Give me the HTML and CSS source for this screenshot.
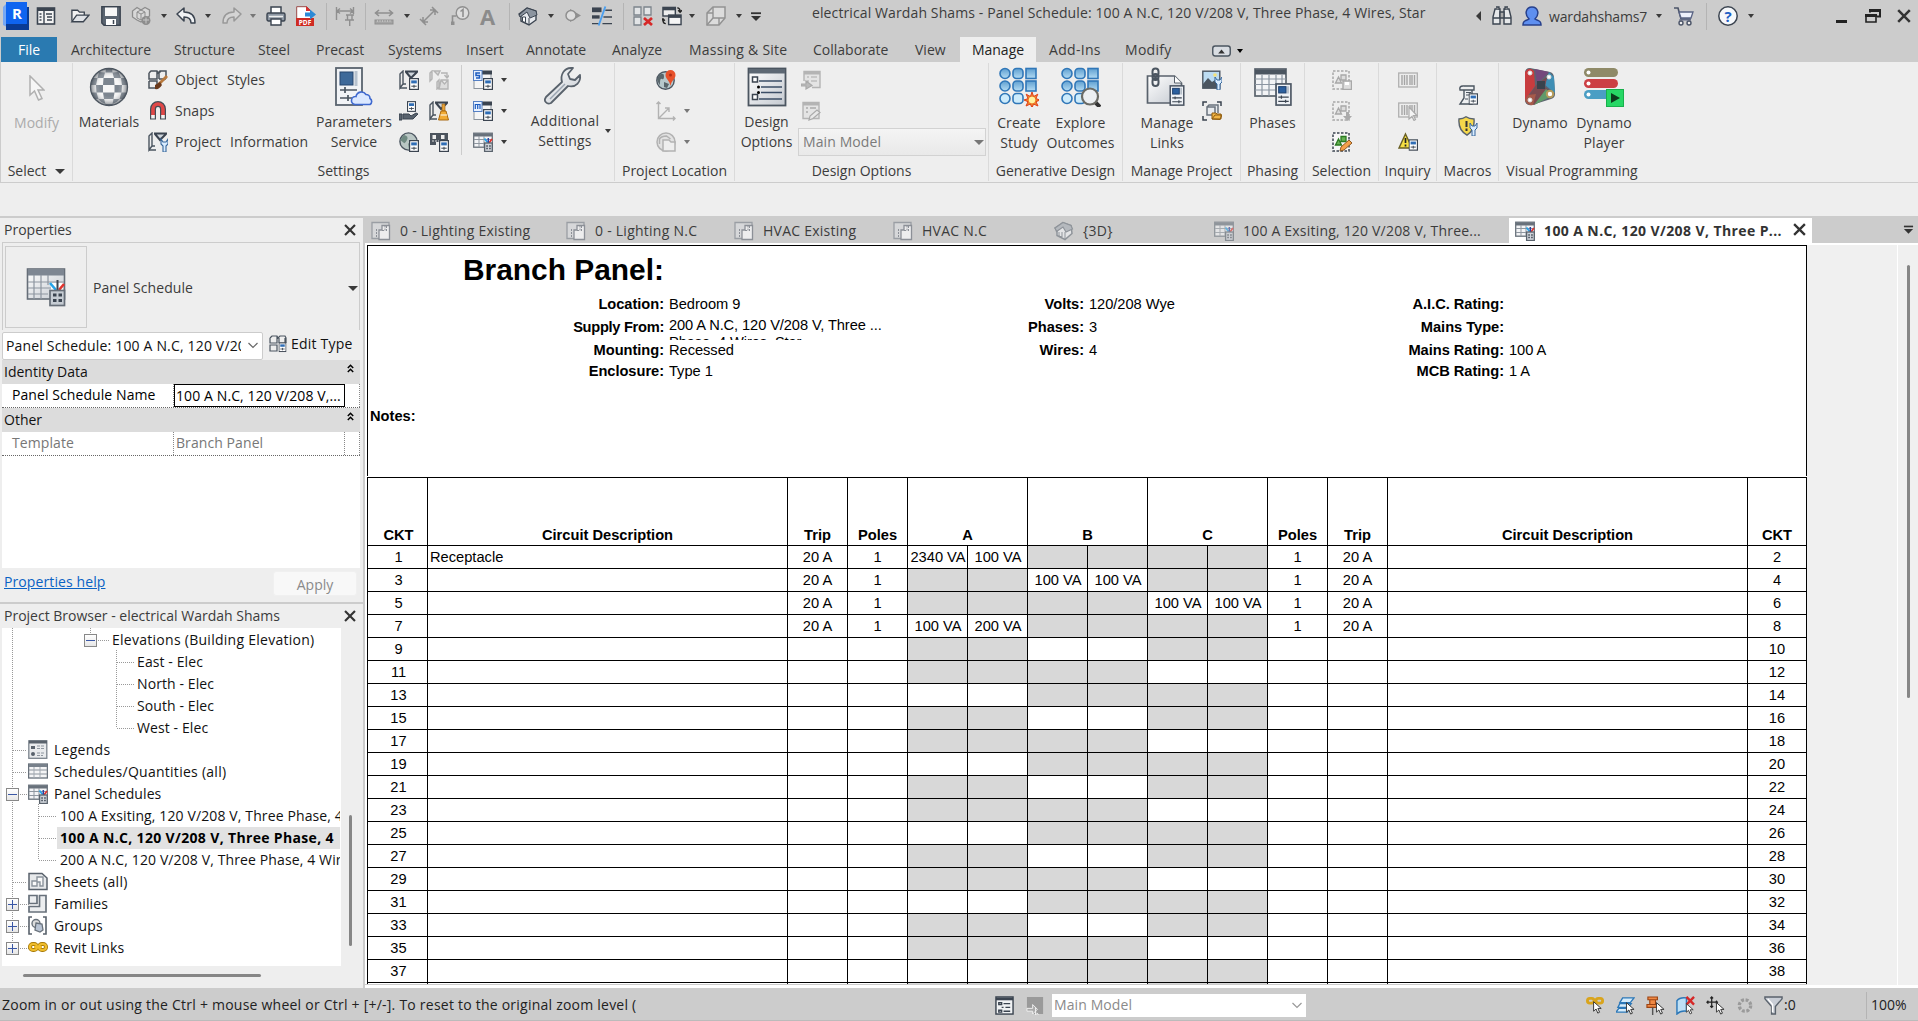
FILE: index.html
```html
<!DOCTYPE html>
<html lang="en">
<head>
<meta charset="utf-8">
<title>Panel Schedule</title>
<link rel="stylesheet" href="styles.css">
</head>
<body>
<svg width="0" height="0" class="defs" aria-hidden="true">
<defs>
<linearGradient id="gl" x1="0" y1="0" x2="1" y2="1"><stop offset="0" stop-color="#fff"/><stop offset="1" stop-color="#c4c9d0"/></linearGradient>
<linearGradient id="gb" x1="0" y1="0" x2="0" y2="1"><stop offset="0" stop-color="#5f9fd0"/><stop offset="1" stop-color="#b4dcf4"/></linearGradient>
<radialGradient id="gs"><stop offset=".5" stop-color="#fff" stop-opacity="0"/><stop offset="1" stop-color="#333b45" stop-opacity=".6"/></radialGradient>

<symbol id="calc" viewBox="0 0 10 12"><rect x=".6" y=".6" width="8.8" height="10.8" fill="#fff" stroke="#3b4450" stroke-width="1.2"/><rect x="2.2" y="2.4" width="5.6" height="3" fill="#2f6db5"/><path d="M2.3 8.2h5.4M5 6.8v3" stroke="#3b4450"/></symbol>
<symbol id="cur" viewBox="0 0 10 14"><path d="M1 1v10l2.6-2.3 1.8 4.3 1.9-.9-1.8-4H9z" fill="#fff" stroke="#333" stroke-width="1"/></symbol>
<symbol id="mini" viewBox="0 0 16 22"><rect x=".9" y=".9" width="14.2" height="20.2" fill="#eef1f5" stroke="#4d5764" stroke-width="1.6"/><rect x="3.4" y="3.5" width="7" height="6" fill="#2b5f9e" stroke="#1d3f6d"/><path d="M12.3 3v7" stroke="#aab4c0" stroke-width="1.5"/><path d="M3 13.5h10M6 12v3M3 17.5h10M10 16v3" stroke="#3b4450" stroke-width="1.2"/></symbol>

<symbol id="logo" viewBox="0 0 27 28"><path d="M0 5 4 1v24l-4-2z" fill="#77a8f4"/><path d="M3 21h20v-16h3v23H3z" fill="#0a3b95"/><rect x="3" width="21" height="22" fill="#0f64f0"/></symbol>
<symbol id="ui" viewBox="0 0 20 20"><rect x="1.5" y="2" width="17" height="16" fill="#f4f4f4" stroke="#3b4450" stroke-width="1.6"/><path d="M1 3.500h18" stroke="#3b4450" stroke-width="3"/><path d="M8 4v14M3.500 8h2M3.500 11h2M3.500 14h2M10 8h6M11 11h5M11 14h5" stroke="#3b4450" stroke-width="1.400"/></symbol>
<symbol id="open" viewBox="0 0 21 20"><path d="M2 15V4h6l2 2h5v3" fill="#f2f2f2" stroke="#3b4450" stroke-width="1.400"/><path d="M2 16 7 9h13l-6 7z" fill="#dfe2e6" stroke="#3b4450" stroke-width="1.400"/></symbol>
<symbol id="save" viewBox="0 0 20 20"><path d="M.8.8h18.4v18.4H3L.8 17z" fill="#5a6470" stroke="#3b4450" stroke-width="1.400"/><rect x="4" y="1.500" width="12" height="8.500" fill="#f7f7f7"/><rect x="5" y="13" width="10" height="6" fill="#fff"/><path d="M12.500 14v4" stroke="#3b4450" stroke-width="1.500"/></symbol>
<symbol id="sync" viewBox="0 0 20 20"><path d="M6 1.500 10 4l4-2.500L18.500 4v6l-4 3-4.500 3-4-2-4.500-3V5z" fill="#d8d8d8" stroke="#8d8d8d" stroke-width="1.300"/><path d="M6 6l4-2 4 2v6l-4 2-4-2zM6 6l4 2 4-2M10 8v6" fill="none" stroke="#8d8d8d"/><circle cx="15" cy="14.500" r="4.500" fill="#8d8d8d"/><path d="M12 14h6M15 11.500v6" stroke="#c8c8c8"/></symbol>
<symbol id="undo" viewBox="0 0 20 18"><path d="M1 7l7-6v4c6 0 11 2 11 11h-4c0-4-2-6-7-6v4z" fill="#f0f2f4" stroke="#3b4450" stroke-width="1.500" stroke-linejoin="round"/></symbol>
<symbol id="redo" viewBox="0 0 20 18"><path d="M19 7l-7-6v4C6 5 1 7 1 16h4c0-4 2-6 7-6v4z" fill="#d4d4d4" stroke="#999" stroke-width="1.500" stroke-linejoin="round"/></symbol>
<symbol id="print" viewBox="0 0 20 20"><path d="M5 8V1h10v7" fill="#fff" stroke="#3b4450" stroke-width="1.500"/><rect x="1" y="7" width="18" height="8" rx="1.500" fill="#8c96a2" stroke="#3b4450" stroke-width="1.400"/><path d="M3 10.500h14" stroke="#eee" stroke-width="1.500"/><path d="M5 13h10v6H5z" fill="#fff" stroke="#3b4450" stroke-width="1.400"/></symbol>
<symbol id="pdf" viewBox="0 0 20 20"><path d="M.7.7h10l4 4v9H.7z" fill="#fff" stroke="#9a4a48"/><path d="M10 0l5 5h-5z" fill="#d83030"/><rect y="12" width="18" height="8" fill="#cf2b22"/><path d="M9 6.500h5v-3l6 5-6 5v-3H9z" fill="#2d8ad6"/></symbol>
<symbol id="dim" viewBox="0 0 20 20"><g stroke="#8f8f8f" stroke-width="1.400" fill="none"><path d="M1.500 1v13M18.500 1v7M2 5h16M5 2.500 2 5l3 2.500M15 2.500 18 5l-3 2.500M11 9h8M12.500 9v5M17 9v5M10 14h9M14.700 14v6"/></g></symbol>
<symbol id="meas" viewBox="0 0 20 20"><path d="M1 7h18M5 4 1.500 7 5 10M15 4l3.500 3-3.500 3" stroke="#8f8f8f" stroke-width="1.600" fill="none"/><rect x="1" y="14" width="18" height="4" fill="#a5a5a5" stroke="#8f8f8f"/><path d="M3 15h14" stroke="#ddd" stroke-dasharray="1 1.500"/></symbol>
<symbol id="align" viewBox="0 0 20 20"><path d="M4 16 16 4M4 11v5h5M11 4h5v5M1 13l6 6M13 1l6 6" stroke="#8f8f8f" stroke-width="1.500" fill="none"/></symbol>
<symbol id="tag" viewBox="0 0 20 20"><circle cx="12.500" cy="7" r="6.300" fill="#ddd" stroke="#8f8f8f" stroke-width="1.400"/><path d="M10.500 5.500 13 3.500V11M6 10H2.500v6" stroke="#8f8f8f" stroke-width="1.600" fill="none"/><rect x="1" y="15.500" width="3.500" height="3.500" fill="#8f8f8f"/></symbol>
<symbol id="house" viewBox="0 0 20 20"><path d="M1 8 9 2l9 3v9l-7 5-8-4V9z" fill="#e6e9ed" stroke="#3b4450" stroke-width="1.400"/><path d="M9 2 18 5l1 4-7 3-3-6-7 5-1-2z" fill="#8b949f" stroke="#3b4450"/><path d="M11 12v7M4.500 11v4.500l3 1V11z" stroke="#3b4450" fill="#fff"/></symbol>
<symbol id="sect" viewBox="0 0 18 20"><path d="M6 3l11 6.500L6 16z" fill="#8f8f8f"/><circle cx="7" cy="9.500" r="5" fill="#ddd" stroke="#8f8f8f" stroke-width="1.500"/></symbol>
<symbol id="thin" viewBox="0 0 21 20"><path d="M0 3.500h10" stroke="#3b4450" stroke-width="5"/><path d="M0 11h8" stroke="#3b4450" stroke-width="3.500"/><path d="M0 18h7M14 4h7M12 11h9M11 18h10" stroke="#3b4450" stroke-width="1.500"/><path d="M14 0 7 20" stroke="#4a9ff0" stroke-width="2"/></symbol>
<symbol id="closeh" viewBox="0 0 20 20"><path d="M1 1h7v8H1zM11 1h7v8h-7zM1 11h7v8H1z" fill="#e2e4e6" stroke="#7c848c" stroke-width="1.300"/><path d="M11 12l8 7M19 12l-8 7" stroke="#d62828" stroke-width="2.700"/></symbol>
<symbol id="switch" viewBox="0 0 21 20"><rect x="1" y="1" width="13" height="9" fill="#eee" stroke="#3b4450" stroke-width="1.500"/><path d="M1 2.500h13" stroke="#3b4450" stroke-width="3"/><rect x="7" y="9" width="13" height="10" fill="#f5f5f5" stroke="#3b4450" stroke-width="1.500"/><path d="M7 10.500h13" stroke="#3b4450" stroke-width="3"/><path d="M16 1.500q3 0 3 4M17 4l2 2 2-2M4 18q-3 0-3-4M-1 15l2-2 2 2" stroke="#222" stroke-width="1.500" fill="none"/></symbol>
<symbol id="sel3" viewBox="0 0 20 20"><path d="M1 7l6-6h12v11l-6 7H1z" fill="#dcdcdc" stroke="#929292" stroke-width="1.500"/><path d="M7 1v11h12M1 7h6M13 12v7M7 12l-6 7" fill="none" stroke="#929292" stroke-width="1.400"/></symbol>
<symbol id="more" viewBox="0 0 12 9"><path d="M1 1.200h10" stroke="#333" stroke-width="1.800"/><path d="M1 4h10L6 9z" fill="#333"/></symbol>
<symbol id="bino" viewBox="0 0 20 20"><path d="M1 11 3 3h5v15H1zM12 3h5l2 8v7h-7z" fill="#e6e8ea" stroke="#3b4450" stroke-width="1.400"/><path d="M8 6h4v6H8zM1 12h7M12 12h7M4 1h3v3M13 4V1h3" fill="#aaa" stroke="#3b4450" stroke-width="1.300"/></symbol>
<symbol id="user" viewBox="0 0 20 20"><path d="M1 19c0-5 3-4 6-6-5-5-3-12 3-12s8 7 3 12c3 2 6 1 6 6z" fill="#5e8ff0" stroke="#27408c" stroke-width="1.500"/></symbol>
<symbol id="cart" viewBox="0 0 20 20"><path d="M0 2h4l3 11h10" stroke="#4b5468" stroke-width="1.600" fill="none"/><path d="M5 6h14l-2 6H7z" fill="#eef1fb" stroke="#5a6484" stroke-width="1.300"/><path d="M5 14h12" stroke="#5a6484"/><circle cx="7" cy="17" r="2" fill="#eee" stroke="#4b5468" stroke-width="1.400"/><circle cx="15" cy="17" r="2" fill="#eee" stroke="#4b5468" stroke-width="1.400"/></symbol>
<symbol id="help" viewBox="0 0 20 20"><circle cx="10" cy="10" r="9.200" fill="#f6f8fb" stroke="#3b4450" stroke-width="1.500"/></symbol>
<symbol id="restore" viewBox="0 0 16 14"><path d="M5 3.500V1h10v6.500h-3" fill="none" stroke="#222" stroke-width="2"/><path d="M1 7h10v6H1z" fill="none" stroke="#222" stroke-width="1.600"/><path d="M0 6.500h12" stroke="#222" stroke-width="3"/><path d="M4 1.500h12" stroke="#222" stroke-width="3"/></symbol>
<symbol id="x" viewBox="0 0 14 14"><path d="M1.200 1.200 12.800 12.800M12.800 1.200 1.200 12.800" stroke="#333" stroke-width="2.500"/></symbol>

<symbol id="arrow" viewBox="0 0 16 26"><path d="M1 1v19l4.500-4 4 9 3.500-1.500-4-8.500h6z" fill="#f6f6f6" stroke="#b0b0b0" stroke-width="1.500"/></symbol>
<symbol id="ball" viewBox="0 0 40 40"><circle cx="20" cy="20" r="18.500" fill="#f6f6f6"/><g fill="#7c858f"><path d="M17 1.500h6l.5 4h-7zM10 5l6 .5-1.500 5.500h-6zM23.500 5.500l6-.5 2.500 6h-7zM14.500 11h10.500l.5 7h-11.500zM3.500 11h5l-1.500 7H1.700zM32 11h4.500l2 7h-5.500zM7 18h7v7.500H7.500zM25.500 18h7.500l-.5 7.500h-7zM14 25.500h11.500l-1 6.500h-9.500zM1.800 25.500h5.700l2 6.500H5.500zM32.500 25.500h5.700L35 32h-4.500zM9.500 32h5.500l1.500 5q-4-1-7-5zM24.500 32h6q-3 4-7 5zM16 37h8l-1 2h-6z"/></g><circle cx="20" cy="20" r="18.500" fill="url(#gs)" stroke="#4d5660" stroke-width="1.300"/></symbol>
<symbol id="objst" viewBox="0 0 20 20"><path d="M1 3l2-2h6l1 2 2-2h6v7l-2 2M1 3v6h8V1M11 9V3l2-2M1 11v7h6M1 11h8v4M11 9h7" fill="#eee" stroke="#4b535c" stroke-width="1.500"/><path d="M19 6 11 14" stroke="#b97a3e" stroke-width="2.800"/><path d="M12 12l-5 3v4q4 1 7-4z" fill="#6b3a1c"/></symbol>
<symbol id="snap" viewBox="0 0 20 20"><path d="M5 18.500V8a5 5 0 0 1 10 0v10.500" fill="none" stroke="#444d57" stroke-width="6"/><path d="M5 15V8a5 5 0 0 1 10 0v7" fill="none" stroke="#e04848" stroke-width="3.600"/><path d="M5 14v3.500M15 14v3.500" stroke="#f2f2f2" stroke-width="3.600"/></symbol>
<symbol id="pbase" viewBox="0 0 20 20"><path d="M1 4l3-3v13l-3 4z" fill="#eee" stroke="#4b5560" stroke-width="1.400"/><path d="M1 18h7M4 14h3" stroke="#4b5560" stroke-width="1.400"/><path d="M6 1.500h13M7 2l5 6 6-6" stroke="#3b4450" stroke-width="2" fill="#cfd5db"/></symbol>
<symbol id="pinfo" viewBox="0 0 20 20"><use href="#pbase"/><path d="M13 7v5l2 2v6h3v-6l2-2V7l-2 3h-3z" fill="#d9ecff" stroke="#37679b" stroke-width="1.100"/></symbol>
<symbol id="pparam" viewBox="0 0 20 20"><use href="#pbase"/><use href="#calc" x="10" y="8" width="10" height="12"/></symbol>
<symbol id="xfer" viewBox="0 0 20 20"><g fill="#ddd" stroke="#b4b4b4" stroke-width="1.400"><path d="M1 3l2-2v8l-2 2zM5 1h6l-2 4zM8 12l2-2v7l-2 2zM12 10h7v9h-9zM12 10l3.500 4 3.500-4"/><path d="M12 3h6v4M15.500 5 18 8l2.500-3" fill="none"/></g></symbol>
<symbol id="hand" viewBox="0 0 20 20"><use href="#calc" x="8" y="0" width="9" height="11"/><path d="M0 13h3v6H0zM4 13h6l2 2 5-3 2 1-5 5H4z" fill="#59636e" stroke="#3b4450"/></symbol>
<symbol id="purge" viewBox="0 0 20 20"><use href="#pbase"/><path d="M13 3h3v7h-3z" fill="#e8a33b" stroke="#8f5a10" stroke-width=".6"/><path d="M12 10h5l2.500 9h-10z" fill="#f1ab35" stroke="#a86912"/><path d="M11.500 14h6.500" stroke="#fff"/></symbol>
<symbol id="globep" viewBox="0 0 20 20"><circle cx="9.500" cy="9.500" r="8.600" fill="#b9c6c4" stroke="#4b5560" stroke-width="1.400"/><path d="M5 3q5 1 3 5t-3 3-4-3zM9 11l4 3-3 4z" fill="#6f8a82"/><use href="#calc" x="10" y="8" width="10" height="12"/></symbol>
<symbol id="tape" viewBox="0 0 20 20"><path d="M1 1h18v9H7v3H1z" fill="#4b535d"/><rect x="3.500" y="3" width="3.500" height="4" fill="#eee"/><rect x="12" y="3" width="3.500" height="4" fill="#eee"/><path d="M3 9h14" stroke="#ddd" stroke-dasharray="2 1"/><use href="#calc" x="10" y="8" width="10" height="12"/></symbol>
<symbol id="mepd" viewBox="0 0 20 20"><rect x="1" y="1.500" width="17" height="17" fill="#f5f5f5" stroke="#8b939c"/><path d="M8 2.500h11" stroke="#3b4450" stroke-width="4"/><rect width="8.500" height="10" x=".5" y=".5" fill="#e8f1ff" stroke="#5580c4"/></symbol>
<symbol id="structs" viewBox="0 0 20 20"><use href="#mepd"/><path d="M7 3H3v2.500h3.500V8H3" stroke="#1d5cc0" stroke-width="1.500" fill="none"/><use href="#calc" x="10" y="8" width="10" height="12"/></symbol>
<symbol id="meps" viewBox="0 0 20 20"><use href="#mepd"/><path d="M2.300 8V3.500H7V8M4.700 3.500V8" stroke="#1d5cc0" stroke-width="1.200" fill="none"/><use href="#calc" x="10" y="8" width="10" height="12"/></symbol>
<symbol id="sched" viewBox="0 0 20 20"><rect x=".7" y="1.200" width="18.600" height="14" fill="#f3f4f6" stroke="#68717b" stroke-width="1.300"/><path d="M1 3h18" stroke="#68717b" stroke-width="3"/><path d="M1 7.500h18M1 11.500h11M6 4v11M11 4v11" stroke="#8f97a0"/><path d="M12.500 8h6v4h-6z" fill="#f3f4f6"/><path d="M11.500 6.500l3 4" stroke="#25a3e8" stroke-width="1.700"/><path d="M19 7l-3 4" stroke="#e2342e" stroke-width="1.700"/><path d="M15.300 6v5" stroke="#2b3fa0" stroke-width="1.500"/><rect x="11.600" y="11" width="7.700" height="8.500" fill="#cfd4da" stroke="#59626c" stroke-width="1.300"/><path d="M13.300 14h1.500M16.200 14h1.500M13.300 16.500h1.500M16.200 16.500h1.500" stroke="#3b4450" stroke-width="1.500"/></symbol>
<symbol id="globe" viewBox="0 0 20 20"><circle cx="9.500" cy="10.500" r="8.700" fill="#b6c8cc" stroke="#4b5560" stroke-width="1.400"/><path d="M3 5q5-3 5 1t-2 3-2 4-3-4zM8 12l5 2-2 4-3-1z" fill="#59666c"/><path d="M14.500 16c-1-6-5-7-5-11a4.800 4.800 0 0 1 10 0c0 4-4 5-5 11z" fill="#e8512b"/><circle cx="14.500" cy="5" r="1.500" fill="#b02e16"/></symbol>
<symbol id="coord" viewBox="0 0 20 20"><path d="M2.500 1v16.500H19M2.500 17.500 13 7M9 7h4v4M.5 3l2-2 2 2M17 15.500l2 2-2 2" fill="none" stroke="#b2b2b2" stroke-width="1.400"/></symbol>
<symbol id="posn" viewBox="0 0 20 20"><circle cx="10" cy="10" r="9" fill="#e2e2e2" stroke="#b2b2b2" stroke-width="1.500"/><path d="M3.500 12V7q2-3 7-3l4 3" fill="none" stroke="#b2b2b2" stroke-width="1.500"/><path d="M7 8h6l2 2h4v9H7z" fill="#eee" stroke="#b2b2b2" stroke-width="1.500"/></symbol>
<symbol id="opt1" viewBox="0 0 20 20"><path d="M3 11V1.500h16v16h-8" fill="#e4e4e4" stroke="#b4b4b4" stroke-width="1.400"/><path d="M3 3h16" stroke="#b4b4b4" stroke-width="3"/><path d="M6 7h2M10 7h6M6 11h2M10 11h6M0 14h5v-3l6 4.500L5 19v-3H0z" fill="#bbb" stroke="#aaa" stroke-width="1.200"/></symbol>
<symbol id="opt2" viewBox="0 0 20 20"><path d="M2 1.500h16v16H2z" fill="#e4e4e4" stroke="#b4b4b4" stroke-width="1.400"/><path d="M2 3h16" stroke="#b4b4b4" stroke-width="3"/><path d="M5 7h2M9 7h6M5 11h2" stroke="#aaa" stroke-width="1.400"/><path d="M8 19l1-4 7-6 3 2.500-7 6z" fill="#e8e8e8" stroke="#aaa" stroke-width="1.200"/></symbol>
<symbol id="params" viewBox="0 0 40 40"><rect x="2" y="1" width="26" height="37" fill="#f1f3f6" stroke="#59636e" stroke-width="1.800"/><rect x="6" y="5" width="13" height="13" fill="#3e6999" stroke="#26466e"/><path d="M22 4v15" stroke="#b7c2cf" stroke-width="3"/><path d="M6 23h17M11 20v6M6 31h12M14 28v6" stroke="#4b5560" stroke-width="1.700"/><path d="M21 37.500a4 4 0 0 1 1-8 5.500 5.500 0 0 1 10-2 4 4 0 0 1 4 4 3.500 3.500 0 0 1 0 6z" fill="#dbe8ff" stroke="#3f69cf" stroke-width="1.600"/></symbol>
<symbol id="wrench" viewBox="0 0 40 40"><path d="M4 31 20 16C18 9 22 2 29 2h2l-5 6 2 5 5 1 5-5c1 7-4 13-12 11L9 37c-4 2-8-2-5-6z" fill="url(#gl)" stroke="#59626c" stroke-width="1.800" stroke-linejoin="round"/><path d="M8 33 23 18" stroke="#9aa4b0" stroke-width="1.500"/></symbol>
<symbol id="dopt" viewBox="0 0 40 40"><rect x="1.500" y="1.500" width="37" height="37" fill="url(#gl)" stroke="#4b5560" stroke-width="1.800"/><rect x="2" y="2" width="36" height="4.500" fill="#5d6874"/><path d="M12 14h23M14 20h21M14 25.500h21M12 32h23" stroke="#3b4d66" stroke-width="1.700"/><path d="M5.500 10h5v5h-5zM5.500 27.500h5v5h-5z" fill="#fff" stroke="#3b4450" stroke-width="1.500"/><circle cx="11.500" cy="20" r="1.500"/><circle cx="11.500" cy="25.500" r="1.500"/></symbol>
<symbol id="gen" viewBox="0 0 40 40"><g fill="url(#gb)" stroke="#3077b8" stroke-width="1.600"><circle cx="6" cy="6.500" r="5"/><rect x="14" y="1.500" width="10" height="10" rx="3.500"/><rect x="27" y="1.500" width="10" height="10"/><circle cx="6" cy="19" r="5"/><rect x="14" y="14" width="10" height="10" rx="3.500"/><rect x="27" y="14" width="10" height="10"/></g><g fill="#cdebfb" stroke="#3077b8" stroke-width="1.600"><circle cx="6" cy="31.500" r="5"/><rect x="14" y="26.500" width="10" height="10" rx="3.500"/></g></symbol>
<symbol id="create" viewBox="0 0 40 40"><use href="#gen"/><path d="M33 25l1.600 4.500 4.200-2.300-1.900 4.400L41 33l-4 1.700 2 4.300-4.500-2L33 41l-1.600-4-4.400 2 2-4.300-4-1.700 4.100-1.400-1.900-4.400 4.200 2.300z" fill="#f0842a" stroke="#e0401a"/><circle cx="33" cy="33" r="3.200" fill="#fff3a0"/></symbol>
<symbol id="explore" viewBox="0 0 40 40"><use href="#gen"/><path d="M34 35l5 5" stroke="#333" stroke-width="4"/><circle cx="29" cy="29.500" r="8" fill="#eceff2" stroke="#6b6b66" stroke-width="2.200"/></symbol>
<symbol id="mlinks" viewBox="0 0 42 40"><path d="M1.500 9h27l7 7v20h-34z" fill="url(#gl)" stroke="#59626c" stroke-width="1.700"/><path d="M28.500 9v7h7" fill="#fff" stroke="#59626c"/><g fill="none" stroke="#4b5560" stroke-width="2"><rect x="6.500" y="1.500" width="6" height="8" rx="3"/><rect x="6.500" y="7" width="6" height="6" rx="3"/><rect x="6.500" y="11" width="6" height="8" rx="3"/></g><use href="#mini" x="23" y="18" width="16" height="21"/></symbol>
<symbol id="decal" viewBox="0 0 20 20"><rect x=".8" y="1.200" width="17" height="17" fill="#bcdcf2" stroke="#4b5560" stroke-width="1.400"/><path d="M1 14l5-6 4 4 3-2 4 3v5H1z" fill="#4b5560"/><circle cx="13" cy="5" r="1.800" fill="#f4e27a"/><path d="M13 7v5l2 2v6h3v-6l2-2V7l-2 3h-3z" fill="#d9ecff" stroke="#37679b"/></symbol>
<symbol id="startv" viewBox="0 0 20 20"><path d="M1 5V1h4M15 1h4v4M1 15v4h4" fill="none" stroke="#3b4450" stroke-width="1.500"/><path d="M5 6l2-2h9v8M5 6h8v8H5z" fill="#e8ebee" stroke="#6a737d" stroke-width="1.500"/><path d="M10 18v-6h4l1 1h4v5zM10 18l3-4h7l-2 4.500z" fill="#f2b545" stroke="#8f5d10"/></symbol>
<symbol id="phases" viewBox="0 0 40 40"><rect x="2" y="2" width="31" height="27" fill="#f3f4f6" stroke="#59626c" stroke-width="1.700"/><path d="M2 5h31" stroke="#4b5560" stroke-width="5"/><path d="M2 12h31M2 17.500h31M2 23h31M9 8v21M16 8v21M23 8v21M29 8v10" stroke="#8b95a1" stroke-width="1.200"/><use href="#mini" x="22" y="16" width="17" height="23"/></symbol>
<symbol id="selg" viewBox="0 0 20 20"><rect x="1" y="1" width="16" height="18" fill="none" stroke="#a8a8a8" stroke-width="1.500" stroke-dasharray="2.500 1.500"/><path d="M3.500 13l3-6 3 6zM9 5h5v5H9z" fill="#ddd" stroke="#a8a8a8" stroke-width="1.300"/></symbol>
<symbol id="selsave" viewBox="0 0 20 20"><use href="#selg"/><rect x="11" y="11" width="8.500" height="8.500" fill="#ddd" stroke="#a8a8a8" stroke-width="1.400"/><path d="M13 12h4v3h-4z" fill="#fff"/></symbol>
<symbol id="selload" viewBox="0 0 20 20"><use href="#selg"/><path d="M14 11h3v4h3l-4.500 5-4.500-5h3z" fill="#aaa"/></symbol>
<symbol id="seledit" viewBox="0 0 20 20"><rect x="1" y="1" width="16" height="18" fill="#f7f7f7" stroke="#3b4450" stroke-width="1.500" stroke-dasharray="2.500 1.500"/><path d="M3.500 13l3-6 3 6zM9 4.500h5v5H9z" fill="#67b254" stroke="#2b7a22" stroke-width="1.300"/><path d="M8 19l1-4 8-7 3 3-8 7z" fill="#f3a04a" stroke="#8f5a22"/></symbol>
<symbol id="ids" viewBox="0 0 20 20"><rect x=".7" y="3" width="18.600" height="14" fill="#eee" stroke="#b0b0b0" stroke-width="1.300"/><path d="M4 5v10M6.500 5v10M9 5v10M12 5v10M14 5v10M16.500 5v10" stroke="#a5a5a5" stroke-width="1.400"/></symbol>
<symbol id="idsel" viewBox="0 0 20 20"><use href="#ids" y="-1"/><path d="M11 6v12l3-2.500 2 4 1.500-1-2-4H19z" fill="#f4f4f4" stroke="#aaa" stroke-width="1.200"/></symbol>
<symbol id="warn" viewBox="0 0 20 20"><path d="M7.500 2 14 16H1z" fill="#f5df42" stroke="#6a6026" stroke-width="1.400"/><path d="M7.500 6v5M7.500 12.500v2" stroke="#222" stroke-width="1.700"/><use href="#calc" x="10.500" y="7" width="9.500" height="12"/></symbol>
<symbol id="macro" viewBox="0 0 20 20"><path d="M5 1h11v4H6v8l-4 6h12V5" fill="#eef0f2" stroke="#4b5560" stroke-width="1.400"/><path d="M5 1Q1 1 2 5h4" fill="#eef0f2" stroke="#4b5560" stroke-width="1.400"/><path d="M8 7.500h5M8 10h3M7 14h3" stroke="#4b5560"/><use href="#calc" x="10.500" y="8" width="9.500" height="12"/></symbol>
<symbol id="msec" viewBox="0 0 20 20"><path d="M8 .8Q5 3 1 3q-1 11 8 16.200Q17 14 16 3 11 3 8 .8z" fill="#f5d84a" stroke="#59626c" stroke-width="1.400"/><path d="M8.500 5v6M8.500 12.500v2.500" stroke="#333" stroke-width="2"/><path d="M12 7v5l2 2v6h3v-6l2-2V7l-2 3h-3z" fill="#d9ecff" stroke="#37679b"/></symbol>
<symbol id="dyn" viewBox="0 0 32 40"><path d="M1 6Q1 1 6 1l20 4q4 1 4 6l1 16q0 4-4 5L8 38q-7 1-7-5z" fill="#5c6470"/><path d="M1 5v28l10-14L10 4Q5-1 1 5z" fill="#c73c3e"/><path d="M11 2l14 3-12 12z" fill="#74487c"/><path d="M25 5l5 5 1 16-10-8z" fill="#3f8fb5"/><path d="M13 17l10-7-2 10 9 7-20 11-9-4z" fill="#7b4a50"/><path d="M22 22l8 6-20 10z" fill="#5f9a6a"/><path d="M1 33q2 6 8 5l3-11-8 1z" fill="#a65a4a"/><path d="M13 14h8v8h-8z" fill="#39424c"/><g fill="#fff" stroke="#ddd"><circle cx="6" cy="6" r="2"/><circle cx="25" cy="10" r="2"/><circle cx="6" cy="33" r="2"/></g><circle cx="26" cy="27" r="3.200" fill="#fff" stroke="#b59b5a" stroke-width="2"/></symbol>
<symbol id="dynp" viewBox="0 0 42 40"><rect x="1" y="1" width="34" height="9" rx="4.500" fill="#8f8a68"/><rect x="1" y="12" width="34" height="9" rx="4.500" fill="#cc3f44"/><path d="M5.500 23H30v9H5.500a4.500 4.500 0 0 1 0-9z" fill="#4b9ec4"/><g fill="#fff"><circle cx="5.500" cy="5.500" r="2"/><circle cx="5.500" cy="16.500" r="2"/><circle cx="5.500" cy="27.500" r="2"/></g><rect x="23.500" y="22.500" width="17" height="17" fill="#27d765" stroke="#18b04c"/><path d="M28 26v10l9-5z" fill="#0c3b1c"/></symbol>
<symbol id="mm" viewBox="0 0 20 12"><rect x=".8" y=".8" width="18.400" height="10.400" rx="2.500" fill="#d9dde2" stroke="#4b5560" stroke-width="1.500"/><path d="M6.500 8.500h7L10 4.500z" fill="#333"/></symbol>

<symbol id="plan" viewBox="0 0 20 20"><path d="M1 1.500h17V17.500H1z" fill="#d6d7d9" stroke="#9a9ea4" stroke-width="1.300"/><path d="M8 9h3V4.500h7.500v14H8z" fill="#ededee" stroke="#8c9097" stroke-width="1.300"/><path d="M5.500 8v9M11 9.500h3V5M15.500 5v6" fill="none" stroke="#8c9097" stroke-dasharray="2 1"/></symbol>
<symbol id="hgray" viewBox="0 0 20 20"><path d="M1 7 9 1.500l8 3 1 8-7 6-8-4V9z" fill="#e3e4e6" stroke="#8f949a" stroke-width="1.500"/><path d="M9 1.500l8 3 1.500 3.500-6.500 3-3-5-6.500 4.500L1 7z" fill="#b5b9be" stroke="#8f949a" stroke-width="1.200"/><path d="M11 11v7M5 11v4l3 1v-5" fill="none" stroke="#8f949a"/></symbol>
<symbol id="psbig" viewBox="0 0 40 40"><rect x="1.500" y="2" width="37" height="30" fill="url(#gl)" stroke="#666e78" stroke-width="1.600"/><rect x="2" y="2.500" width="36" height="6" fill="#7d8692"/><path d="M2 15h36M2 21h24M2 27h20M8 8v24M15 8v24M22 8v10" stroke="#8d95a0" stroke-width="1.200"/><path d="M25 16h12v7H25z" fill="#fff"/><path d="M24 16l6 7" stroke="#25a3e8" stroke-width="2.600"/><path d="M38 17l-5 6" stroke="#e2342e" stroke-width="2.600"/><path d="M31.500 13v11" stroke="#3b4450" stroke-width="2"/><rect x="24" y="23.500" width="14.500" height="15" fill="#c6ccd3" stroke="#666e78" stroke-width="1.700"/><path d="M27 28h3.500M32.500 28H36M27 33.500h3.500M32.500 33.500H36" stroke="#3b4450" stroke-width="3"/></symbol>
<symbol id="etype" viewBox="0 0 18 18"><path d="M1 3l2-2h5l1 2 2-2h5l1 2v5M1 3v5h7V1M10 8V3M1 10v6h7v-6zM10 8h6V3" fill="#eee" stroke="#4b5560" stroke-width="1.200"/><use href="#calc" x="9.500" y="7" width="8" height="10.500"/></symbol>
<symbol id="legend" viewBox="0 0 20 20"><rect x=".8" y=".8" width="18" height="17.500" fill="#e9ebed" stroke="#7b848d" stroke-width="1.300"/><path d="M1 2h18" stroke="#59626c" stroke-width="3"/><path d="M3 6h4v3H3z" fill="#59626c"/><circle cx="5" cy="14" r="2" fill="#59626c"/><path d="M9 6h7M9 8.500h7M9 13h7M9 15.500h6" stroke="#8d959e" stroke-dasharray="3 1"/></symbol>
<symbol id="tbl" viewBox="0 0 20 20"><rect x=".6" y="2" width="18.800" height="14" fill="#f5f5f6" stroke="#68717b" stroke-width="1.300"/><path d="M1 3.500h18" stroke="#78818b" stroke-width="3"/><path d="M1 8h18M1 12h18" stroke="#8b939c"/><path d="M6 5v11M12 5v11" stroke="#a3aab2"/></symbol>
<symbol id="sheet" viewBox="0 0 20 20"><path d="M1 1.500h13L19 6v11.500H1z" fill="#e7e9eb" stroke="#59626c" stroke-width="1.500"/><path d="M4 14V9h5V5h6v9h-3v-4h-3v4z" fill="#fafafa" stroke="#8b939c" stroke-width="1.400"/></symbol>
<symbol id="fam" viewBox="0 0 20 20"><path d="M1 1.500h8v8H1zM11.500 1.500H18v16.500H1v-5.500h10.500z" fill="#eceef0" stroke="#68717b" stroke-width="1.700"/></symbol>
<symbol id="grp" viewBox="0 0 20 20"><path d="M4 1H1v17h3M15 1h3v17h-3" fill="none" stroke="#59626c" stroke-width="1.600"/><circle cx="8" cy="7.500" r="4" fill="#ddd" stroke="#68717b" stroke-width="1.400"/><path d="M8 7l6 1 1 6-3 2-5-2z" fill="#b9c4d4" stroke="#68717b" stroke-width="1.300"/></symbol>
<symbol id="chain" viewBox="0 0 20 20"><g fill="none" stroke="#a87a08" stroke-width="4"><rect x="2" y="6" width="7" height="6" rx="3"/><rect x="11" y="6" width="7" height="6" rx="3"/></g><g fill="none" stroke="#f0bd2c" stroke-width="2.200"><rect x="2" y="6" width="7" height="6" rx="3"/><rect x="11" y="6" width="7" height="6" rx="3"/><path d="M6 9h8"/></g></symbol>

<symbol id="s1" viewBox="0 0 20 20"><rect x="1" y="1" width="18" height="18" fill="#f0f2f4" stroke="#3b4450" stroke-width="1.500"/><path d="M1 3h18" stroke="#3b4450" stroke-width="3"/><path d="M4 7h3v2H4zM9 8h7M7 12h2M11 12h5M4 15h3v2H4zM9 16h7" stroke="#3b4450" stroke-width="1.500" fill="none"/></symbol>
<symbol id="s2" viewBox="0 0 20 20"><path d="M1 1h17v18H8v-6H1z" fill="#9a9a9a"/><path d="M1 13h6v-4l5 5-5 5v-3H1zM10 12v8l2-2 1 2" fill="#aaa" stroke="#f0f0f0"/></symbol>
<symbol id="k1" viewBox="0 0 20 20"><rect x="1.500" y="2.500" width="7" height="5" rx="2.500" fill="none" stroke="#d9a41c" stroke-width="3"/><rect x="10.500" y="2.500" width="7" height="5" rx="2.500" fill="none" stroke="#d9a41c" stroke-width="3"/><use href="#cur" x="7" y="5" width="10" height="14"/></symbol>
<symbol id="k2" viewBox="0 0 20 20"><path d="M7 2h12l-4 5H4zM4 8h12l-3 4H2zM3 13h11l-2 4H0z" fill="#d6ecfb" stroke="#2d78b8" stroke-width="1.400"/><use href="#cur" x="10" y="6" width="10" height="14"/></symbol>
<symbol id="k3" viewBox="0 0 20 20"><path d="M2 1h10v3H2zM4 4h6v5H4zM1 9h12v3H1z" fill="#f08a45" stroke="#9d4413" stroke-width="1.200"/><path d="M7 12v8" stroke="#555" stroke-width="1.500"/><use href="#cur" x="10" y="6" width="10" height="14"/></symbol>
<symbol id="k4" viewBox="0 0 20 20"><path d="M1 5q3-4 10-3v14q-6-1-10 3z" fill="#bfe0f5" stroke="#2d78b8" stroke-width="1.500"/><path d="M11 1l8 8M19 1l-8 8" stroke="#d62828" stroke-width="2.500"/><use href="#cur" x="10" y="7" width="9" height="13"/></symbol>
<symbol id="k5" viewBox="0 0 20 20"><path d="M6 1v11M1 6.500h11M4.500 2.500 6 1l1.500 1.500M4.500 10.500 6 12l1.500-1.500M2.500 5 1 6.500 2.500 8M10.500 5 12 6.500 10.500 8" stroke="#222" stroke-width="1.300" fill="none"/><use href="#cur" x="10" y="6" width="10" height="14"/></symbol>
<symbol id="k6" viewBox="0 0 16 20"><circle cx="8" cy="10" r="6" fill="none" stroke="#9a9a9a" stroke-width="3.500" stroke-dasharray="3 1.700"/></symbol>
<symbol id="k7" viewBox="0 0 20 20"><path d="M1 1h18v2l-7 8v8H8v-8L1 3z" fill="#c9ced6" stroke="#59626c" stroke-width="1.500"/><path d="M4 3l5 6v8" stroke="#fff" stroke-width="1.500" fill="none"/></symbol>
</defs>
</svg>

<div class="app">
<header class="qat">
  <span class="logo"><svg width="27" height="28"><use href="#logo"/></svg><b>R</b></span>
  <svg><use href="#ui"/></svg><svg><use href="#open"/></svg><svg><use href="#save"/></svg><svg><use href="#sync"/></svg><i class="car"></i>
  <svg><use href="#undo"/></svg><i class="car"></i><svg><use href="#redo"/></svg><i class="car dim"></i><svg><use href="#print"/></svg>
  <span class="pdf"><svg><use href="#pdf"/></svg><b>PDF</b></span><i class="vs"></i><svg><use href="#dim"/></svg><i class="vs"></i><svg><use href="#meas"/></svg><i class="car"></i>
  <svg><use href="#align"/></svg><svg><use href="#tag"/></svg><span class="bigA">A</span><i class="vs"></i><svg><use href="#house"/></svg><i class="car"></i>
  <svg><use href="#sect"/></svg><svg><use href="#thin"/></svg><i class="vs"></i><svg><use href="#closeh"/></svg><svg><use href="#switch"/></svg><i class="car"></i>
  <svg><use href="#sel3"/></svg><i class="car"></i><svg class="mo"><use href="#more"/></svg>
  <span class="ttl">electrical Wardah Shams - Panel Schedule: 100 A N.C, 120 V/208 V, Three Phase, 4 Wires, Star</span>
  <i class="lar"></i><svg><use href="#bino"/></svg><svg><use href="#user"/></svg><span class="usr">wardahshams7</span><i class="car"></i>
  <svg><use href="#cart"/></svg><i class="vs"></i><span class="hlp"><svg><use href="#help"/></svg><b>?</b></span><i class="car"></i>
  <i class="min"></i><svg class="rst"><use href="#restore"/></svg><svg class="cls"><use href="#x"/></svg>
</header>
<nav class="tabs">
  <span class="file">File</span><span>Architecture</span><span>Structure</span><span>Steel</span><span>Precast</span><span>Systems</span><span>Insert</span><span>Annotate</span><span>Analyze</span><span class="ms">Massing &amp; Site</span><span>Collaborate</span><span>View</span><span class="on">Manage</span><span class="wd">Add-Ins</span><span class="wd">Modify</span><svg><use href="#mm"/></svg><i class="car blk"></i>
</nav>
<section class="ribbon">
  <div class="pn w-sel"><div class="bd"><div class="big off m1"><svg class="ar"><use href="#arrow"/></svg><span>Modify</span></div></div><div class="lb">Select <i class="car lg"></i></div></div>
  <div class="pn w-set"><div class="bd set">
    <div class="big"><svg><use href="#ball"/></svg><span>Materials</span></div>
    <div class="sm list"><div><svg><use href="#objst"/></svg>Object Styles</div><div><svg><use href="#snap"/></svg>Snaps</div><div><svg><use href="#pinfo"/></svg>Project Information</div></div>
    <div class="big"><svg><use href="#params"/></svg><span>Parameters<br>Service</span></div>
    <div class="sm"><div><svg><use href="#pparam"/></svg></div><div><svg><use href="#hand"/></svg></div><div><svg><use href="#globep"/></svg></div></div>
    <div class="sm"><div><svg><use href="#xfer"/></svg></div><div><svg><use href="#purge"/></svg></div><div><svg><use href="#tape"/></svg></div></div>
    <i class="bar"></i>
    <div class="sm drop"><div><svg><use href="#structs"/></svg><i class="car"></i></div><div><svg><use href="#meps"/></svg><i class="car"></i></div><div><svg><use href="#sched"/></svg><i class="car"></i></div></div>
    <div class="big up"><svg class="wr"><use href="#wrench"/></svg><span>Additional<br>Settings</span></div><i class="car acar"></i>
  </div><div class="lb">Settings</div></div>
  <div class="pn w-loc"><div class="bd loc"><div class="sm drop"><div><svg><use href="#globe"/></svg></div><div><svg><use href="#coord"/></svg><i class="car dk"></i></div><div><svg><use href="#posn"/></svg><i class="car dk"></i></div></div></div><div class="lb">Project Location</div></div>
  <div class="pn w-opt"><div class="bd opt"><div class="big"><svg><use href="#dopt"/></svg><span>Design<br>Options</span></div><div class="sm"><div><svg><use href="#opt1"/></svg></div><div><svg><use href="#opt2"/></svg></div><div class="combo">Main Model<i class="car lg dk"></i></div></div></div><div class="lb">Design Options</div></div>
  <div class="pn w-gen"><div class="bd gen"><div class="big dn"><svg><use href="#create"/></svg><span>Create<br>Study</span></div><div class="big dn"><svg><use href="#explore"/></svg><span>Explore<br>Outcomes</span></div></div><div class="lb">Generative Design</div></div>
  <div class="pn w-mp"><div class="bd mp"><div class="big dn"><svg class="w42"><use href="#mlinks"/></svg><span>Manage<br>Links</span></div><div class="sm"><div><svg><use href="#decal"/></svg></div><div><svg><use href="#startv"/></svg></div></div></div><div class="lb">Manage Project</div></div>
  <div class="pn w-ph"><div class="bd cen"><div class="big dn"><svg><use href="#phases"/></svg><span>Phases</span></div></div><div class="lb">Phasing</div></div>
  <div class="pn w-se"><div class="bd cen"><div class="sm"><div><svg><use href="#selsave"/></svg></div><div><svg><use href="#selload"/></svg></div><div><svg><use href="#seledit"/></svg></div></div></div><div class="lb">Selection</div></div>
  <div class="pn w-in"><div class="bd cen"><div class="sm"><div><svg><use href="#ids"/></svg></div><div><svg><use href="#idsel"/></svg></div><div><svg><use href="#warn"/></svg></div></div></div><div class="lb">Inquiry</div></div>
  <div class="pn w-ma"><div class="bd cen"><div class="sm mac"><div><svg><use href="#macro"/></svg></div><div><svg><use href="#msec"/></svg></div></div></div><div class="lb">Macros</div></div>
  <div class="pn w-vp"><div class="bd vp"><div class="big dn"><svg class="w32"><use href="#dyn"/></svg><span>Dynamo</span></div><div class="big dn"><svg class="w42"><use href="#dynp"/></svg><span>Dynamo<br>Player</span></div></div><div class="lb">Visual Programming</div></div>
</section>
<div class="optbar"></div>

<main class="work">
  <aside class="side">
    <section class="props">
      <h2>Properties<svg><use href="#x"/></svg></h2>
      <div class="typebox"><span class="thumb"><svg><use href="#psbig"/></svg></span><span>Panel Schedule</span><i class="car lg"></i></div>
      <div class="inst"><div class="cb"><span>Panel Schedule: 100 A N.C, 120 V/208 V</span><svg viewBox="0 0 10 7"><path d="M.5 1 5 5.500 9.500 1" fill="none" stroke="#666" stroke-width="1.200"/></svg></div><svg class="et"><use href="#etype"/></svg><span>Edit Type</span></div>
      <div class="grp">Identity Data<svg viewBox="0 0 7 9"><path d="M.8 4 3.500 1.300 6.200 4M.8 8 3.500 5.300 6.200 8" fill="none" stroke="#000" stroke-width="1.500"/></svg></div>
      <div class="pr"><span>Panel Schedule Name</span><span class="edit">100 A N.C, 120 V/208 V,...</span><span></span></div>
      <div class="grp">Other<svg viewBox="0 0 7 9"><path d="M.8 4 3.500 1.300 6.200 4M.8 8 3.500 5.300 6.200 8" fill="none" stroke="#000" stroke-width="1.500"/></svg></div>
      <div class="pr ro"><span>Template</span><span>Branch Panel</span><span></span></div>
      <div class="blank"></div>
      <div class="foot"><a>Properties help</a><span class="apply">Apply</span></div>
    </section>
    <section class="browser">
      <h2>Project Browser - electrical Wardah Shams<svg><use href="#x"/></svg></h2>
      <div class="treewrap"><div class="tree">
        <svg class="lines" width="339" height="338"><path d="M10.500 0V320M88.500 0v8M96 12.500h11M114.500 22v78M115 34.500h18M115 56.500h18M115 78.500h18M115 100.500h18M11 122.500h14M11 144.500h14M18 166.500h9M36.500 176v56M37 188.500h18M37 210.500h18M37 232.500h18M11 254.500h14M18 276.500h9M18 298.500h9M18 320.500h9"/></svg>
        <div class="r l3"><i class="ex"></i>Elevations (Building Elevation)</div>
        <div class="r l4">East - Elec</div><div class="r l4">North - Elec</div><div class="r l4">South - Elec</div><div class="r l4">West - Elec</div>
        <div class="r l1"><svg><use href="#legend"/></svg>Legends</div>
        <div class="r l1"><svg><use href="#tbl"/></svg>Schedules/Quantities (all)</div>
        <div class="r l0"><i class="ex"></i><svg><use href="#sched"/></svg>Panel Schedules</div>
        <div class="r l2"><span>100 A Exsiting, 120 V/208 V, Three Phase, 4 Wires</span></div>
        <div class="r l2 cur"><span>100 A N.C, 120 V/208 V, Three Phase, 4</span></div>
        <div class="r l2"><span>200 A N.C, 120 V/208 V, Three Phase, 4 Wires</span></div>
        <div class="r l1"><svg><use href="#sheet"/></svg>Sheets (all)</div>
        <div class="r l0"><i class="ex pl"></i><svg><use href="#fam"/></svg>Families</div>
        <div class="r l0"><i class="ex pl"></i><svg><use href="#grp"/></svg>Groups</div>
        <div class="r l0"><i class="ex pl"></i><svg><use href="#chain"/></svg>Revit Links</div>
      </div><i class="vth"></i></div>
      <i class="hth"></i>
    </section>
  </aside>
  <section class="docs">
    <div class="dtabs">
      <span><svg><use href="#plan"/></svg>0 - Lighting Existing</span><span><svg><use href="#plan"/></svg>0 - Lighting N.C</span><span><svg><use href="#plan"/></svg>HVAC Existing</span><span><svg><use href="#plan"/></svg>HVAC N.C</span><span><svg><use href="#hgray"/></svg>{3D}</span><span class="fade"><svg><use href="#sched"/></svg>100 A Exsiting, 120 V/208 V, Three...</span><span class="act"><svg><use href="#sched"/></svg><b>100 A N.C, 120 V/208 V, Three P...</b><svg class="tx"><use href="#x"/></svg></span><svg class="ov"><use href="#more"/></svg>
    </div>
    <div class="view">
      <div class="sheet">
        <div class="head">
          <h1>Branch Panel:</h1>
          <div class="info">
            <b>Location:</b><span>Bedroom 9</span><b>Volts:</b><span>120/208 Wye</span><b>A.I.C. Rating:</b><span></span>
            <b class="tight">Supply From:</b><span class="wrap">200 A N.C, 120 V/208 V, Three ...<br>Phase, 4 Wires, Star</span><b>Phases:</b><span>3</span><b>Mains Type:</b><span></span>
            <b>Mounting:</b><span>Recessed</span><b>Wires:</b><span>4</span><b>Mains Rating:</b><span>100 A</span>
            <b>Enclosure:</b><span>Type 1</span><b></b><span></span><b>MCB Rating:</b><span>1 A</span>
          </div>
          <b class="notes">Notes:</b>
        </div>
        <div class="grid" id="grid"></div>
      </div>
      <div class="gut"></div>
      <div class="scr"><i></i></div>
    </div>
  </section>
</main>
<footer class="status">
  <span class="msg">Zoom in or out using the Ctrl + mouse wheel or Ctrl + [+/-]. To reset to the original zoom level (</span>
  <svg><use href="#s1"/></svg><svg><use href="#s2"/></svg>
  <span class="sc">Main Model<svg viewBox="0 0 10 7"><path d="M.5 1 5 5.500 9.500 1" fill="none" stroke="#999" stroke-width="1.200"/></svg></span>
  <svg><use href="#k1"/></svg><svg><use href="#k2"/></svg><svg><use href="#k3"/></svg><svg><use href="#k4"/></svg><svg><use href="#k5"/></svg><svg class="gear"><use href="#k6"/></svg><svg><use href="#k7"/></svg><span>:0</span><i class="vs"></i><span>100%</span>
</footer>
</div>
<script src="schedule.js"></script>
</body>
</html>
```
FILE: styles.css
```css
* { box-sizing: border-box; }
body { margin: 0; font: 14px/20px "Open Sans", "Noto Sans", sans-serif; color: #3c3c3c; background: #eee; overflow: hidden; }
.defs { position: absolute; }
svg { display: block; width: 20px; height: 20px; flex: none; overflow: visible; }
i { display: block; }
.app { width: 1918px; height: 1021px; display: flex; flex-direction: column; white-space: nowrap; }
.car { width: 0; height: 0; border: 3px solid transparent; border-top: 4px solid #3a3a3a; border-bottom: 0; flex: none; }
.car.lg { border-width: 5px 5px 0; }
.car.dk { border-top-color: #777; }
.car.dim { border-top-color: #777; }
.car.blk { border-top-color: #000; }

.qat { height: 37px; padding: 0 0 5px 3px; background: #ccc; display: grid; align-items: center; justify-items: start;
  grid-template-columns: 33px 34px 31px 30px 30px 15px 29px 17px 28px 16px 30px 30px 9px 30px 9px 30px 15px 31px 30px 29px 9px 30px 15px 29px 31px 10px 29px 27px 17px 30px 14px 62px 664px 16px 30px 27px 107px 18px 32px 12px 30px 88px 29px 32px 20px; }
.logo, .pdf, .hlp { display: grid; place-items: center; }
.logo > *, .pdf > *, .hlp > * { grid-area: 1 / 1; }
.logo svg { width: 27px; height: 28px; }
.logo b { color: #fff; font-size: 15px; margin: -7px 0 0 1px; }
.pdf b { align-self: end; font-size: 6.500px; line-height: 7px; color: #fff; margin-right: 2px; }
.hlp b { color: #1f5fc4; font-size: 15px; }
.bigA { font: bold 22px/24px "Open Sans", sans-serif; color: #8b8b8b; }
.vs { width: 1px; height: 27px; background: #b4b4b4; }
.qat .mo { width: 12px; height: 9px; }
.ttl { margin-top: -6px; letter-spacing: .11px; }
.usr { letter-spacing: -.15px; margin-top: 1px; }
.lar { border: 5px solid transparent; border-right-color: #3a3a3a; border-left: 0; }
.min { width: 11px; height: 3px; background: #222; margin-top: 11px; }
.qat .rst { width: 16px; height: 14px; }
.qat .cls { width: 14px; height: 14px; }

.tabs { height: 25px; background: #ccc; padding-left: 1px; display: grid; line-height: 25px;
  grid-template-columns: 70px 103px 84px 58px 72px 78px 60px 86px 77px 124px 102px 45px 89px 76px 87px 25px 20px; }
.tabs svg { width: 19px; height: 12px; margin-top: 8px; }
.tabs .car { margin-top: 12px; }
.file { width: 56px; background: #2a7ab1; color: #fff; text-align: center; }
.tabs .on { width: 76px; background: #eee; color: #222; text-align: center; }
.tabs .ms { letter-spacing: .25px; }
.tabs .wd { letter-spacing: .3px; }

.ribbon { height: 121px; border-bottom: 1px solid #ccc; border-left: 1px solid #ccc; display: flex; background: #eee; }
.pn { display: flex; flex-direction: column; border-right: 1px solid #dadada; margin: 1px 0 1px; padding-top: 2px; flex: none; }
.bd { height: 95px; display: flex; }
.lb { display: flex; justify-content: center; align-items: center; height: 22px; padding-top: 2px; }
.lb .car { margin-left: 9px; }
.w-sel { width: 72px; } .w-set { width: 542px; } .w-loc { width: 120px; } .w-opt { width: 254px; } .w-gen { width: 134px; }
.w-mp { width: 118px; } .w-ph { width: 64px; } .w-se { width: 74px; } .w-in { width: 58px; } .w-ma { width: 62px; } .w-vp { width: 146px; border: 0; }
.big { display: flex; flex-direction: column; align-items: center; text-align: center; padding-top: 2px; flex: none; }
.big svg { width: 40px; height: 40px; }
.big span { margin-top: 5px; }
.big.dn span { margin-top: 6px; letter-spacing: .1px; }
.big.up span { margin-top: 4px; letter-spacing: .2px; }
.big svg.ar { width: 16px; height: 26px; margin: 8px 0 7px; }
.big svg.wr { width: 40px; height: 40px; margin: -1px 6px 1px 0; }
.big svg.w42 { width: 42px; }
.big svg.w32 { width: 32px; }
.m1 { width: 71px; }
.off { color: #ababab; }
.off span { margin-top: 5px; }
.sm { margin-top: -1px; }
.sm > div { height: 31px; display: flex; align-items: center; gap: 7px; }
.sm .car { margin-left: 3px; }
.sm.drop .car { margin-left: 1px; }
.list { word-spacing: 5.500px; letter-spacing: .04px; }
.set { display: grid; grid-template-columns: 75px 167px 84px 30px 32px 12px 52px 80px 14px; }
.set > .big:first-child { width: 72px; }
.set > .big:nth-child(3) { width: 78px; }
.set > .bar { width: 1px; height: 90px; background: #ccc; }
.acar { margin-top: 64px; }
.set > .big.up { width: 80px; }
.loc { padding-left: 41px; }
.opt > .big { width: 63px; }
.opt > .sm > div:not(.combo) { padding-left: 3px; }
.opt > .sm .combo { width: 188px; height: 28px; margin-top: 2px; border: 1px solid #d2d2d2; background: linear-gradient(#f4f4f4, #e9e9e9); color: #7a7a7a; padding: 0 1px 0 4px; justify-content: space-between; letter-spacing: .1px; }
.gen > .big { width: 60px; } .gen > .big + .big { width: 63px; }
.mp > .big { width: 79px; padding-left: 9px; }
.cen { justify-content: center; }
.mac { padding-top: 15px; }
.vp > .big { width: 82px; } .vp > .big + .big { width: 46px; }
.optbar { height: 33px; background: #eee; }

.work { height: 772px; display: flex; }
.side { width: 365px; border-right: 2px solid #ccc; display: flex; flex-direction: column; background: #eee; }
.side section { border-top: 2px solid #ccc; }
.side h2 { margin: 0; font: inherit; height: 24px; line-height: 28px; padding: 0 7px 0 4px; display: flex; justify-content: space-between; align-items: center; }
.side h2 svg { width: 12px; height: 12px; }
.props { height: 386px; padding-right: 3px; }
.props h2 { padding-right: 4px; }
.typebox { height: 88px; margin-left: 2px; border: 1px solid #ccc; border-bottom: 0; padding: 3px 1px 0 2px; display: flex; align-items: center; gap: 6px; letter-spacing: .05px; }
.thumb { width: 82px; height: 82px; margin-bottom: 2px; border: 1px solid #ccc; display: grid; place-items: center; }
.thumb svg { width: 40px; height: 40px; }
.typebox .car { margin-left: auto; }
.inst { height: 30px; margin-left: 2px; padding-top: 1px; display: flex; align-items: center; color: #111; }
.inst .cb { width: 261px; height: 28px; background: #fff; border: 1px solid #ccc; border-radius: 2px; padding: 0 4px 0 3px; display: flex; justify-content: space-between; align-items: center; }
.cb span { width: 235px; overflow: hidden; letter-spacing: .17px; }
.cb svg { width: 10px; height: 7px; }
.inst .et { width: 18px; height: 18px; margin: -4px 4px 0 6px; }
.inst > span { margin-top: -4px; letter-spacing: .2px; }
.grp { height: 24px; line-height: 24px; margin-left: 2px; background: #dcdcdc; color: #111; padding: 0 6px 0 2px; display: flex; justify-content: space-between; }
.grp svg { width: 7px; height: 9px; margin-top: 4px; }
.pr { height: 24px; margin-left: 2px; background: #fff; color: #000; display: grid; grid-template-columns: 172px 171px 15px; border-bottom: 1px dotted #666; letter-spacing: .08px; }
.pr span { border-right: 1px dotted #888; line-height: 22px; padding-left: 2px; overflow: hidden; }
.pr span:first-child { padding-left: 10px; }
.pr .edit { border: 1px solid #000; letter-spacing: .1px; padding-left: 1px; line-height: 21px; }
.pr.ro { color: #777; }
.blank { flex: none; height: 112px; margin-left: 2px; background: #fff; }
.foot { height: 34px; display: flex; justify-content: space-between; padding: 3px 3px 0 4px; }
.foot a { color: #0a62c4; text-decoration: underline; line-height: 21px; letter-spacing: .1px; }
.apply { width: 84px; height: 25px; line-height: 25px; text-align: center; color: #8a8a8a; background: #f8f8f8; border: 1px solid #f0f0f0; border-radius: 3px; }
.browser { height: 386px; }
.treewrap { display: flex; }
.tree { width: 339px; height: 338px; margin-left: 2px; background: #fff; color: #111; position: relative; overflow: hidden; padding-top: 1px; letter-spacing: .27px; }
.lines { position: absolute; left: 0; top: 0; width: 339px; height: 338px; }
.lines path { fill: none; stroke: #999; stroke-dasharray: 1 1; }
.r { height: 22px; line-height: 22px; display: flex; align-items: center; position: relative; }
.l4 { padding-left: 135px; letter-spacing: .1px; } .l3 { padding-left: 82px; } .l3 .ex { margin-right: 15px; }
.l1 { padding-left: 26px; } .l0 { padding-left: 4px; letter-spacing: .1px; } .l0 .ex { margin-right: 9px; }
.l1 svg, .l0 svg { margin-right: 6px; }
.l2 { padding-left: 55px; } .l2 span { width: 283px; padding-left: 3px; overflow: hidden; letter-spacing: .12px; }
.cur span { background: #e2e2e2; font-weight: bold; color: #000; letter-spacing: .34px; }
.ex { width: 13px; height: 13px; border: 1px solid #888; background: linear-gradient(#3a57a5, #3a57a5) center / 9px 1px no-repeat, linear-gradient(#fff, #e6e6e6); }
.ex.pl { background: linear-gradient(#3a57a5, #3a57a5) center / 9px 1px no-repeat, linear-gradient(#3a57a5, #3a57a5) center / 1px 9px no-repeat, linear-gradient(#fff, #e6e6e6); }
.vth { width: 3px; height: 131px; margin: 187px 0 0 8px; background: #868686; border-radius: 2px; }
.hth { width: 238px; height: 3px; margin: 8px 0 0 23px; background: #868686; border-radius: 2px; }

.docs { width: 1553px; display: flex; flex-direction: column; }
.dtabs { height: 27px; background: #ccc; display: grid; grid-template-columns: 195px 168px 159px 161px 160px 301px 394px 12px; align-items: end; letter-spacing: .25px; }
.dtabs span { height: 25px; padding-left: 6px; display: flex; align-items: center; gap: 9px; }
.dtabs .fade { letter-spacing: .2px; }
.dtabs .fade svg { opacity: .6; }
.dtabs .act { width: 303px; background: #fff; color: #333; gap: 9px; padding-right: 6px; }
.act b { letter-spacing: .4px; }
.act .tx { width: 13px; height: 13px; margin: -2px 0 0 auto; }
.dtabs .ov { width: 11px; height: 9px; align-self: center; }
.view { height: 745px; border-top: 2px solid #fff; border-bottom: 3px solid #fff; display: flex; background: #f0f0f0; }
.sheet { width: 1442px; padding-left: 2px; background: #fff; color: #000; font: 14.670px/17px "Liberation Sans", Arial, sans-serif; border-bottom: 1px solid #ccc; overflow: hidden; }
.head { width: 1440px; height: 231px; border: 1px solid #000; border-bottom: 0; margin-bottom: 1px; }
.head h1 { margin: 0; width: 296px; text-align: right; font-size: 29.900px; line-height: 34px; padding-top: 7px; height: 48px; }
.info { display: grid; grid-template-columns: 299px 240px 180px 240px 180px 299px; grid-template-rows: 23px 23px 21px 21px; letter-spacing: -.04px; }
.info b { text-align: right; padding-right: 3px; line-height: 20px; }
.info .tight { letter-spacing: -.3px; }
.info span { padding-left: 2px; line-height: 20px; }
.info .wrap { line-height: 17px; overflow: hidden; letter-spacing: -.1px; }
.notes { display: block; margin-top: 26px; padding-left: 2px; }
.grid { display: grid; width: 1440px; grid-template-columns: 60px 360px repeat(10, 60px) 360px 60px; grid-auto-rows: 23px; grid-template-rows: 68px; }
.grid div { border: solid #000; border-width: 1px 0 0 1px; text-align: center; line-height: 22px; }
.grid .e { border-right-width: 1px; }
.grid .h { font-weight: bold; line-height: 18px; padding-top: 48px; }
.grid .d2 { grid-column: span 2; }
.grid .k { padding-left: 2px; }
.grid .t { text-align: left; padding-left: 2px; }
.grid .v { padding-left: 1px; }
.grid .g { background: #d8d8d8; }
.gut { width: 91px; border-right: 1px solid #fff; }
.scr i { width: 3px; height: 433px; margin: 20px 0 0 9px; background: #868686; border-radius: 2px; }

.status { height: 33px; background: #ccc; border-bottom: 1px solid #bbb; padding: 2px 0 0 3px; display: grid; align-items: center; color: #222;
  grid-template-columns: 992px 31px 26px 534px 30px 30px 30px 30px 31px 27px 20px 82px 5px 50px; }
.status svg { width: 19px; height: 19px; }
.status svg.gear { width: 16px; }
.status .msg { letter-spacing: .23px; margin-left: -1px; }
.status .sc { width: 254px; height: 23px; line-height: 22px; background: #fff; color: #8a8a8a; padding: 0 4px 0 2px; display: flex; justify-content: space-between; align-items: center; letter-spacing: .1px; }
.status .sc svg { width: 10px; height: 7px; }
```
FILE: schedule.js
```js
const grid = document.getElementById("grid");

function cell(cls, text) {
  const d = document.createElement("div");
  d.className = cls;
  d.textContent = text || "";
  grid.append(d);
}

[["h k", "CKT"], ["h", "Circuit Description"], ["h", "Trip"], ["h", "Poles"],
 ["h d2", "A"], ["h d2", "B"], ["h d2", "C"],
 ["h", "Poles"], ["h", "Trip"], ["h", "Circuit Description"], ["h e", "CKT"]]
  .forEach(([c, t]) => cell(c, t));

const circuits = [
  { name: "Receptacle", left: "2340 VA", right: "100 VA" },
  { left: "100 VA", right: "100 VA" },
  { left: "100 VA", right: "100 VA" },
  { left: "100 VA", right: "200 VA" }
];

for (let i = 0; i < 20; i++) {
  const c = circuits[i];
  const label = i < 19;
  cell("k", label ? String(2 * i + 1) : "");
  cell("t", c && c.name);
  cell("", c && "20 A");
  cell("", c && "1");
  for (let phase = 0; phase < 3; phase++) {
    const active = i % 3 === phase;
    cell(active ? "v" : "g", active && c ? c.left : "");
    cell(active ? "v" : "g", active && c ? c.right : "");
  }
  cell("", c && "1");
  cell("", c && "20 A");
  cell("", "");
  cell("e", label ? String(2 * i + 2) : "");
}
```
